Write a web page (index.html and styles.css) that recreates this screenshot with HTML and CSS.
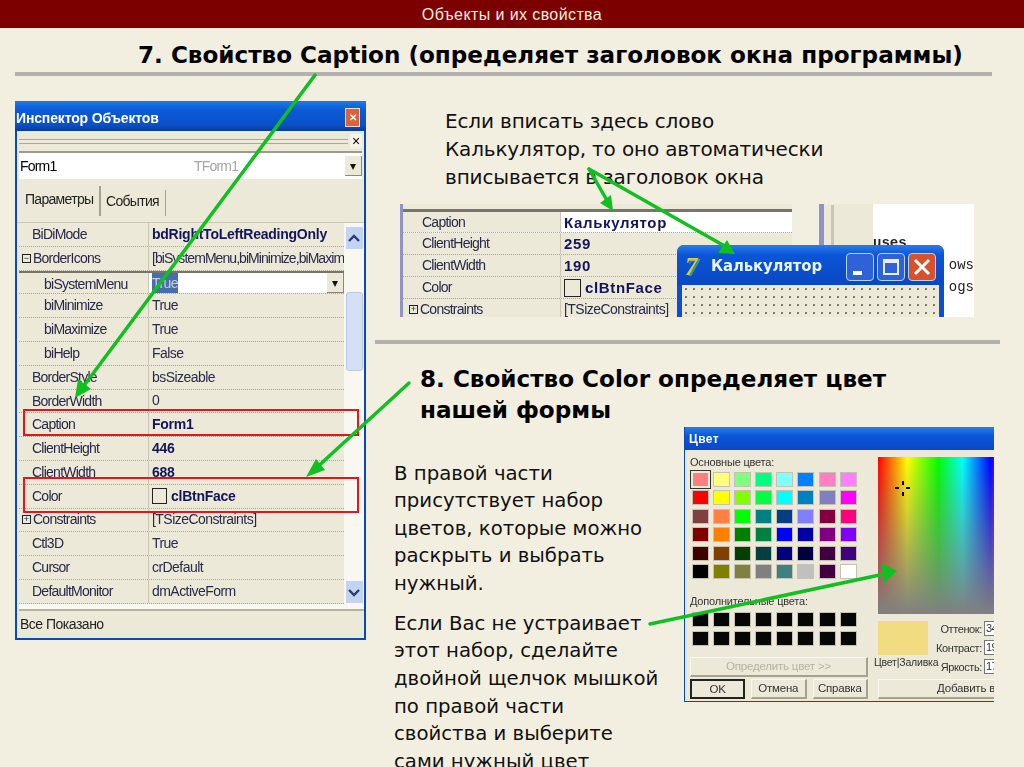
FILE: index.html
```html
<!DOCTYPE html>
<html lang="ru">
<head>
<meta charset="utf-8">
<title>Объекты и их свойства</title>
<link rel="stylesheet" href="styles.css">
</head>
<body>
<div class="slide">
  <header class="topbar">Объекты и их свойства</header>
  <h1 class="title">7. Свойство Caption (определяет заголовок окна программы)</h1>
  <div class="rule rule-top"></div>
  <main class="content">
    <section class="inspector">
      <div class="in-title"><span>Инспектор Объектов</span><b class="in-close">✕</b></div>
      <div class="in-dock"><i></i><b>×</b></div>
      <div class="in-combo"><span class="c-name">Form1</span><span class="c-type">TForm1</span><b class="drop">▾</b></div>
      <div class="in-tabs"><span class="tab on">Параметры</span><span class="tab">События</span></div>
      <div class="in-grid">
        <div class="rows">
          <div class="row"><span class="k">BiDiMode</span><span class="v bold">bdRightToLeftReadingOnly</span></div>
          <div class="row"><span class="k tree"><em>−</em>BorderIcons</span><span class="v tight">[biSystemMenu,biMinimize,biMaximi:</span></div>
          <div class="row sel"><span class="k sub">biSystemMenu</span><span class="v"><mark>True</mark><b class="drop">▾</b></span></div>
          <div class="row"><span class="k sub">biMinimize</span><span class="v">True</span></div>
          <div class="row"><span class="k sub">biMaximize</span><span class="v">True</span></div>
          <div class="row"><span class="k sub">biHelp</span><span class="v">False</span></div>
          <div class="row"><span class="k">BorderStyle</span><span class="v">bsSizeable</span></div>
          <div class="row"><span class="k">BorderWidth</span><span class="v">0</span></div>
          <div class="row"><span class="k">Caption</span><span class="v bold">Form1</span></div>
          <div class="row"><span class="k">ClientHeight</span><span class="v bold">446</span></div>
          <div class="row"><span class="k">ClientWidth</span><span class="v bold">688</span></div>
          <div class="row"><span class="k">Color</span><span class="v bold"><u class="chip"></u>clBtnFace</span></div>
          <div class="row"><span class="k tree"><em>+</em>Constraints</span><span class="v">[TSizeConstraints]</span></div>
          <div class="row"><span class="k">Ctl3D</span><span class="v">True</span></div>
          <div class="row"><span class="k">Cursor</span><span class="v">crDefault</span></div>
          <div class="row"><span class="k">DefaultMonitor</span><span class="v">dmActiveForm</span></div>
        </div>
        <div class="scroll">
          <b class="sb-btn"><svg viewBox="0 0 16 22" width="16" height="22"><path d="M3 14L8 9L13 14" fill="none" stroke="#2c3a70" stroke-width="2.4"/></svg></b>
          <div class="sb-track"><div class="sb-thumb"></div></div>
          <b class="sb-btn"><svg viewBox="0 0 16 22" width="16" height="22"><path d="M3 9L8 14L13 9" fill="none" stroke="#2c3a70" stroke-width="2.4"/></svg></b>
        </div>
      </div>
      <div class="in-status">Все Показано</div>
      <div class="redbox box-caption"></div>
      <div class="redbox box-color"></div>
    </section>

    <div class="right">
      <p class="lead">Если вписать здесь слово<br>Калькулятор, то оно автоматически<br>вписывается в заголовок окна</p>
      <div class="calc-shot">
        <div class="calc-grid">
          <div class="crow clip"></div>
          <div class="crow csel"><span class="k">Caption</span><span class="v bold">Калькулятор</span></div>
          <div class="crow"><span class="k">ClientHeight</span><span class="v bold">259</span></div>
          <div class="crow"><span class="k">ClientWidth</span><span class="v bold">190</span></div>
          <div class="crow"><span class="k">Color</span><span class="v bold"><u class="chip"></u>clBtnFace</span></div>
          <div class="crow"><span class="k tree"><em>+</em>Constraints</span><span class="v">[TSizeConstraints]</span></div>
        </div>
        <div class="calc-gap"><i></i></div>
        <div class="calc-code"><span>uses</span><span class="c-r">ows</span><span class="c-r">ogs</span></div>
        <div class="calc-win">
          <div class="w-title"><span class="w-ico">7</span><span class="w-name">Калькулятор</span>
            <b class="w-btn"><svg viewBox="0 0 26 26" width="26" height="26"><rect x="6" y="17" width="9" height="4" fill="#fff"/></svg></b>
            <b class="w-btn"><svg viewBox="0 0 26 26" width="26" height="26"><rect x="6" y="6" width="14" height="14" fill="none" stroke="#e8f0ff" stroke-width="2"/><rect x="6" y="6" width="14" height="3" fill="#e8f0ff"/></svg></b>
            <b class="w-btn w-x"><svg viewBox="0 0 26 26" width="26" height="26"><path d="M6 6L20 20M20 6L6 20" stroke="#fff" stroke-width="3"/></svg></b></div>
          <div class="w-body"></div>
        </div>
      </div>
      <div class="rule rule-mid"></div>
      <h2 class="sub-title">8. Свойство Color определяет цвет<br>нашей формы</h2>
      <div class="lower">
        <div class="notes">
          <p>В правой части<br>присутствует набор<br>цветов, которые можно<br>раскрыть и выбрать<br>нужный.</p>
          <p>Если Вас не устраивает<br>этот набор, сделайте<br>двойной щелчок мышкой<br>по правой части<br>свойства и выберите<br>сами нужный цвет</p>
        </div>
        <div class="dialog">
          <div class="d-title">Цвет</div>
          <div class="d-body">
            <div class="d-left">
              <div class="d-label">Основные цвета:</div>
              <div class="swatches" id="basic">
                <i class="first" style="background:#ff8080"></i><i style="background:#ffff80"></i><i style="background:#80ff80"></i><i style="background:#00ff80"></i><i style="background:#80ffff"></i><i style="background:#0080ff"></i><i style="background:#ff80c0"></i><i style="background:#ff80ff"></i>
                <i style="background:#ff0000"></i><i style="background:#ffff00"></i><i style="background:#80ff00"></i><i style="background:#00ff40"></i><i style="background:#00ffff"></i><i style="background:#0080c0"></i><i style="background:#8080c0"></i><i style="background:#ff00ff"></i>
                <i style="background:#804040"></i><i style="background:#ff8040"></i><i style="background:#00ff00"></i><i style="background:#008080"></i><i style="background:#004080"></i><i style="background:#8080ff"></i><i style="background:#800040"></i><i style="background:#ff0080"></i>
                <i style="background:#800000"></i><i style="background:#ff8000"></i><i style="background:#008000"></i><i style="background:#008040"></i><i style="background:#0000ff"></i><i style="background:#0000a0"></i><i style="background:#800080"></i><i style="background:#8000ff"></i>
                <i style="background:#400000"></i><i style="background:#804000"></i><i style="background:#004000"></i><i style="background:#004040"></i><i style="background:#000080"></i><i style="background:#000040"></i><i style="background:#400040"></i><i style="background:#400080"></i>
                <i style="background:#000000"></i><i style="background:#808000"></i><i style="background:#808040"></i><i style="background:#808080"></i><i style="background:#408080"></i><i style="background:#c0c0c0"></i><i style="background:#400040"></i><i style="background:#ffffff"></i>
              </div>
              <div class="d-label d-label2">Дополнительные цвета:</div>
              <div class="swatches custom">
                <i></i><i></i><i></i><i></i><i></i><i></i><i></i><i></i>
                <i></i><i></i><i></i><i></i><i></i><i></i><i></i><i></i>
              </div>
              <div class="d-btn wide">Определить цвет &gt;&gt;</div>
              <div class="d-btns"><span class="d-btn ok">OK</span><span class="d-btn">Отмена</span><span class="d-btn">Справка</span></div>
            </div>
            <div class="d-right">
              <div class="spectrum"><span class="cross"></span></div>
              <div class="d-mix">
                <div class="d-prev"><div class="preview"></div><span>Цвет|Заливка</span></div>
                <div class="d-fields">
                  <label>Оттенок:<u>34</u></label>
                  <label>Контраст:<u>19:</u></label>
                  <label>Яркость:<u>17:</u></label>
                </div>
              </div>
              <div class="d-btn add">Добавить в н</div>
            </div>
          </div>
        </div>
      </div>
    </div>
  </main>
  <svg class="arrows" viewBox="0 0 1024 767" aria-hidden="true">
    <g stroke="#10c020" stroke-width="3.5" fill="none" stroke-linecap="round">
      <path d="M315 75L80 391"/>
      <path d="M409 383L314 470"/>
      <path d="M589 169L609 204"/>
      <path d="M589 169L728 248"/>
      <path d="M650 624L889 573"/>
    </g>
    <g fill="#10c020">
      <path d="M75 398L78 379L91 389Z"/>
      <path d="M306 477L316 459L325 470Z"/>
      <path d="M613 211L600 203L611 195Z"/>
      <path d="M735 254L718 253L727 240Z"/>
      <path d="M897 571L881 563L884 583Z"/>
    </g>
  </svg>
</div>
</body>
</html>
```
FILE: styles.css
```css
* { box-sizing: border-box; }
html, body { margin: 0; padding: 0; }
body { background: #f3efe0; font-family: "Liberation Sans", Arial, sans-serif; }
.slide { position: relative; width: 1024px; height: 767px; overflow: hidden; background: #f3efe0; color: #000; }
.topbar { height: 28px; background: #7d0000; color: #f3efe0; text-align: center; font: 16px/29px "Liberation Sans", sans-serif; letter-spacing: .4px; }
.title { margin: 12px 0 0; padding-left: 138px; font: 700 23.1px/30px "DejaVu Sans", sans-serif; white-space: nowrap; }
.rule { background: #b3b1ae; height: 4px; }
.rule-top { margin: 2px 32px 0 15px; }
.content { display: flex; margin-top: 25px; align-items: flex-start; }
.inspector { position: relative; flex: none; width: 351px; height: 539px; margin-left: 15px; background: #ece9d8; border: 2px solid #0a47b8; border-top: 0; filter: blur(.45px); font-size: 14px; }
.in-title { height: 30px; margin: 0 -2px; background: linear-gradient(#1f78e8, #0b5ad6 30%, #0a50c8 80%, #0a3a9a); color: #fff; font-weight: 700; font-size: 14px; letter-spacing: -.15px; display: flex; align-items: center; justify-content: space-between; padding: 4px 6px 0 1px; }
.in-close { width: 15px; height: 19px; margin-top: -2px; background: #d9633a; border: 1px solid #f3d8c8; color: #fff; font-size: 10px; text-align: center; line-height: 17px; }
.in-dock { height: 20px; display: flex; align-items: center; padding: 0 2px 0 2px; gap: 2px; }
.in-dock i { flex: 1; height: 5px; border-top: 1px solid #aca899; border-bottom: 1px solid #aca899; }
.in-dock b { width: 12px; font-size: 14px; line-height: 14px; font-weight: 400; text-align: center; background: #f5f3e8; }
.in-combo { height: 28px; margin: 0 2px; background: #fff; border-top: 2px solid #9d9a8a; display: flex; align-items: center; padding-left: 1px; letter-spacing: -.8px; }
.c-name { width: 174px; }
.c-type { flex: 1; color: #a5a5a5; }
.drop { width: 17px; height: 20px; background: #ece9d8; border-right: 1px solid #8a8878; border-bottom: 1px solid #8a8878; font-size: 12px; line-height: 20px; text-align: center; font-weight: 400; color: #111; letter-spacing: 0; }
.in-tabs { height: 44px; padding: 7px 0 0 8px; display: flex; letter-spacing: -.7px; color: #222; border-bottom: 1px solid #c9c6b6; }
.tab { height: 30px; padding: 5px 6px 0; }
.tab.on { width: 76px; padding-left: 0; border-right: 2px solid #a5a28f; }
.tab:not(.on) { border-right: 1px solid #a5a28f; padding-left: 5px; height: 26px; margin-top: 4px; padding-top: 3px; }
.in-grid { display: flex; height: 388px; margin-left: 2px; border-bottom: 2px solid #b5b2a0; background: #f8f7f0; }
.rows { width: 325px; padding-top: 0; }
.row { display: flex; height: 23.8px; line-height: 23px; border-bottom: 1px dotted #a8a590; background: #ece9d8; color: #28284a; white-space: nowrap; }
.k { width: 130px; flex: none; padding-left: 13px; border-right: 1px solid #c9c6b6; letter-spacing: -.75px; }
.v { flex: 1; padding-left: 3px; letter-spacing: -.55px; overflow: hidden; display: flex; align-items: center; color: #2a2a4a; }
.tight { letter-spacing: -.95px; }
.bold { font-weight: 700; color: #14145a; letter-spacing: -.25px; }
.sub { padding-left: 25px; }
.tree { padding-left: 2px; display: flex; align-items: center; }
.tree em { display: inline-block; width: 9px; height: 9px; border: 1px solid #222; font: 9px/7px "Liberation Sans"; text-align: center; margin: 0 2px 0 1px; flex: none; letter-spacing: 0; }
.sel { background: #ece9d8; border-top: 2px solid #77756a; }
.sel .v { background: #fff; justify-content: space-between; }
.sel .drop { height: 20px; }
mark { background: #4a6ea9; color: #ccd; }
.chip { display: inline-block; width: 15px; height: 16px; border: 1px solid #222; background: #ece9d8; margin-right: 4px; flex: none; }
.scroll { width: 17px; margin-left: 2px; display: flex; flex-direction: column; padding-bottom: 6px; }
.sb-btn { display: block; height: 22px; background: #c3d3f2; line-height: 0; }
.sb-btn:first-child { margin-top: 4px; }
.sb-track { flex: 1; padding-top: 43px; padding-bottom: 210px; }
.sb-thumb { height: 100%; background: #d5e0f5; border: 1px solid #b8c8ec; border-radius: 3px; }
.in-status { height: 27px; padding: 5px 0 0 3px; letter-spacing: -.5px; color: #222; }
.redbox { position: absolute; left: 6px; width: 336px; border: 2px solid #e8141c; }
.box-caption { top: 308px; height: 27px; }
.box-color { top: 376px; height: 36px; }

.right { flex: none; width: 634px; margin-left: 9px; }
.lead { margin: 6px 0 0 70px; font: 20px/28px "DejaVu Sans", sans-serif; letter-spacing: -.15px; color: #111; white-space: nowrap; }
.calc-shot { position: relative; display: flex; margin: 13px 0 0 25px; width: 574px; height: 113px; background: #f6f5ee; filter: blur(.4px); overflow: hidden; font-size: 14px; }
.calc-grid { width: 392px; flex: none; border-left: 3px solid #8f94c8; background: #ece9d8; }
.crow { display: flex; height: 22px; line-height: 21px; border-bottom: 1px dotted #a8a590; background: #ece9d8; color: #28284a; white-space: nowrap; }
.crow .k { padding-left: 19px; width: 158px; border-right: 1px solid #c9c6b6; }
.crow .bold { font-size: 15px; letter-spacing: .65px; }
.crow .chip { width: 17px; height: 18px; }
.crow.clip { height: 8px; border-bottom: 3px solid #77756a; }
.crow.csel { height: 21px; background: #fff; }
.crow.csel .k { background: #ece9d8; }
.crow .tree { padding-left: 5px; }
.calc-gap { width: 81px; flex: none; background: linear-gradient(to right, #f3efe0 27px, #ece9d8 27px); position: relative; }
.calc-gap i { position: absolute; left: 27px; top: 0; bottom: 0; width: 5px; background: #8f94c8; box-shadow: 11px 0 0 -1px #c9c6b6; }
.calc-code { flex: 1; background: #fff; display: flex; flex-direction: column; padding-top: 28px; font: 700 14px/22px "Liberation Mono", monospace; color: #222; }
.c-r { text-align: right; font-weight: 400; }
.calc-win { position: absolute; left: 277px; top: 41px; width: 267px; height: 80px; background: #0b4fd0; border-radius: 7px 7px 0 0; padding: 0 5px; }
.w-title { height: 40px; margin: 0 -5px; padding: 3px 8px 0 8px; display: flex; align-items: center; gap: 3px; background: linear-gradient(#2a7ce8, #0b55d8 25%, #0a48c0); border-radius: 7px 7px 0 0; }
.w-ico { font: italic 700 25px/1 "Liberation Serif", serif; color: #d8c840; width: 23px; text-shadow: 2px 1px 0 #3a9a80; }
.w-name { flex: 1; color: #e8f4ff; font: 700 16.5px/1 "DejaVu Sans Condensed", "DejaVu Sans", sans-serif; letter-spacing: -.1px; }
.w-btn { display: block; width: 28px; height: 28px; background: #2f62d8; border: 1px solid #b8d0f4; border-radius: 4px; line-height: 0; }
.w-x { background: #d8502c; }
.w-body { height: 40px; background-color: #ece9d8; background-image: radial-gradient(#77756a .7px, transparent 1px); background-size: 8px 8px; }
.rule-mid { margin: 23px 9px 0 0; height: 3.5px; }
.sub-title { margin: 20px 0 0 45px; font: 700 23.1px/31px "DejaVu Sans", sans-serif; white-space: nowrap; }
.lower { display: flex; margin-top: 1px; }
.notes { width: 290px; flex: none; margin: 33px 0 0 19px; font: 19.7px/27.6px "DejaVu Sans", sans-serif; color: #111; white-space: nowrap; }
.notes p { margin: 0 0 12.4px; }
.dialog { flex: none; width: 310px; height: 275px; background: #ece9d8; border-left: 1px solid #0a47b8; border-bottom: 1px solid #0a47b8; filter: blur(.4px); overflow: hidden; font-size: 11px; letter-spacing: -.2px; color: #333; }
.d-title { height: 23px; background: linear-gradient(#2a7ce8, #0b55d8 40%, #0a48c8); color: #fff; font-weight: 700; font-size: 12px; line-height: 24px; padding-left: 4px; letter-spacing: .4px; }
.d-body { display: flex; padding: 5px 0 0 5px; }
.d-left { width: 188px; flex: none; }
.d-label { height: 14px; line-height: 14px; margin-bottom: 4px; }
.d-label2 { margin: 16px 0 5px; }
.swatches { display: grid; grid-template-columns: repeat(8, 15px); column-gap: 6.1px; row-gap: 5.6px; padding-left: 3px; }
.swatches i { height: 13px; display: block; box-shadow: 0 0 0 1px #c5c2b2; }
.swatches .first { box-shadow: 0 0 0 2px #ece9d8, 0 0 0 3px #333; }
.custom i { background: #060606; }
.d-btn { display: inline-block; background: #ece9d8; border-right: 2px solid #a5a28f; border-bottom: 2px solid #a5a28f; border-top: 1px solid #f8f7f0; border-left: 1px solid #f8f7f0; text-align: center; font-size: 11.5px; line-height: 17px; }
.wide { display: block; width: 178px; height: 20px; margin: 12px 0 2px; color: #b5b2a2; }
.d-btns { display: flex; gap: 6px; width: 178px; }
.d-btns .d-btn { flex: 1; height: 20px; }
.d-btns .ok { flex: none; width: 55px; border: 2px solid #222; }
.d-right { width: 130px; flex: none; }
.spectrum { position: relative; width: 116px; height: 157px; margin-top: 2px; background: linear-gradient(to bottom, rgba(128,128,128,0), #808080), linear-gradient(to right, #f00 0, #ff0 25%, #0f0 52%, #0ff 73%, #00f 97%, #40f 100%); }
.cross { position: absolute; left: 17px; top: 24px; width: 15px; height: 15px; background: linear-gradient(#000,#000) 50% 0/2px 4px no-repeat, linear-gradient(#000,#000) 50% 100%/2px 4px no-repeat, linear-gradient(#000,#000) 0 50%/4px 2px no-repeat, linear-gradient(#000,#000) 100% 50%/4px 2px no-repeat; }
.d-mix { display: flex; margin-top: 7px; }
.d-prev { width: 58px; flex: none; }
.preview { width: 50px; height: 34px; background: #f1dc82; }
.d-prev span { display: block; margin-left: -4px; white-space: nowrap; font-size: 10.5px; margin-top: 1px; line-height: 13px; }
.d-fields { display: flex; flex-direction: column; gap: 5px; align-items: flex-end; flex: 1; padding-top: 1px; }
.d-fields label { display: flex; align-items: center; height: 14px; white-space: nowrap; font-size: 11px; letter-spacing: -.4px; }
.d-fields u { display: block; width: 28px; height: 15px; background: #fff; border: 1px solid #777; margin: 0 6px 0 2px; text-decoration: none; font-size: 11px; line-height: 13px; padding-left: 1px; }
.add { display: block; width: 130px; height: 20px; margin: 5px 0 0 0; white-space: nowrap; text-align: left; padding-left: 58px; }
.arrows { position: absolute; left: 0; top: 0; width: 1024px; height: 767px; pointer-events: none; }
```
